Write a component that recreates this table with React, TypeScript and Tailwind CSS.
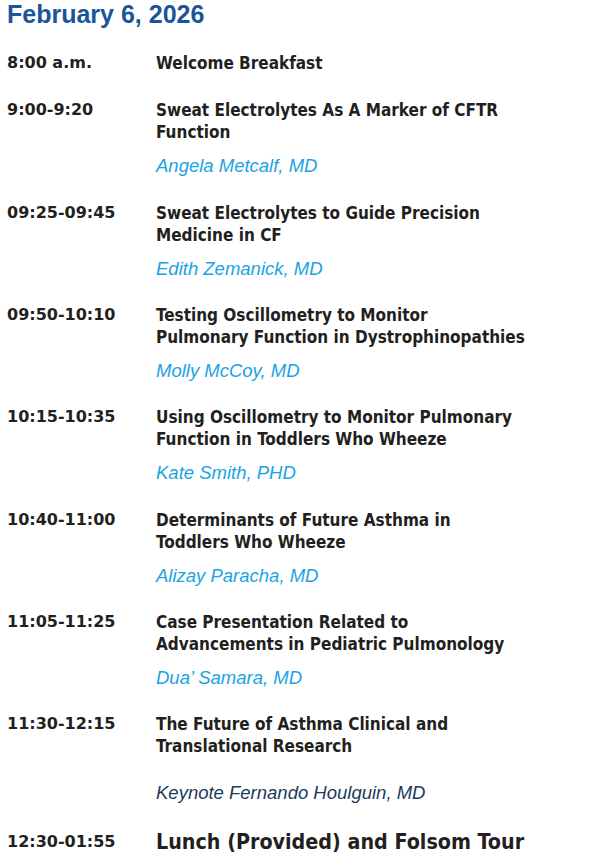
import React from 'react';

type Session = {
  time: string;
  title: string[];
  speaker?: string;
  keynote?: boolean;
};

const sessions: Session[] = [
  { time: '8:00 a.m.', title: ['Welcome Breakfast'] },
  {
    time: '9:00-9:20',
    title: ['Sweat Electrolytes As A Marker of CFTR', 'Function'],
    speaker: 'Angela Metcalf, MD',
  },
  {
    time: '09:25-09:45',
    title: ['Sweat Electrolytes to Guide Precision', 'Medicine in CF'],
    speaker: 'Edith Zemanick, MD',
  },
  {
    time: '09:50-10:10',
    title: ['Testing Oscillometry to Monitor', 'Pulmonary Function in Dystrophinopathies'],
    speaker: 'Molly McCoy, MD',
  },
  {
    time: '10:15-10:35',
    title: ['Using Oscillometry to Monitor Pulmonary', 'Function in Toddlers Who Wheeze'],
    speaker: 'Kate Smith, PHD',
  },
  {
    time: '10:40-11:00',
    title: ['Determinants of Future Asthma in', 'Toddlers Who Wheeze'],
    speaker: 'Alizay Paracha, MD',
  },
  {
    time: '11:05-11:25',
    title: ['Case Presentation Related to', 'Advancements in Pediatric Pulmonology'],
    speaker: 'Dua’ Samara, MD',
  },
  {
    time: '11:30-12:15',
    title: ['The Future of Asthma Clinical and', 'Translational Research'],
    speaker: 'Keynote Fernando Houlguin, MD',
    keynote: true,
  },
];

const App = () => {
  return (
    <div className="min-h-screen bg-white text-[#231f20]">
      <h2 className="pl-[7px] font-['Liberation_Sans',Arial,sans-serif] text-[25px] font-bold leading-[28px] text-[#1a5599]">
        February 6, 2026
      </h2>

      <div className="mt-[24px] flex flex-col gap-[24.33px] font-['DejaVu_Sans_Condensed','DejaVu_Sans',sans-serif] text-[17px] font-bold">
        {sessions.map((s, idx) => (
          <div
            key={s.time}
            className={idx === 0 ? 'flex flex-row items-start pb-[1px] pl-[7px]' : 'flex flex-row items-start pl-[7px]'}
          >
            <div className="w-[149px] shrink-0 font-['DejaVu_Sans',sans-serif] text-[16px] leading-[22px]">
              {s.time}
            </div>
            <div className="flex flex-col">
              <p className="leading-[22px]">
                {s.title.map((line, i) => (
                  <React.Fragment key={i}>
                    {i > 0 && <br />}
                    {line}
                  </React.Fragment>
                ))}
              </p>
              {s.speaker && (
                <p
                  className={
                    s.keynote
                      ? "mt-[25px] font-['Liberation_Sans',Arial,sans-serif] text-[18.5px] font-normal italic leading-[22px] text-[#1c3b5a]"
                      : "mt-[12px] font-['Liberation_Sans',Arial,sans-serif] text-[18.5px] font-normal italic leading-[22px] text-[#1aa3e3]"
                  }
                >
                  {s.speaker}
                </p>
              )}
            </div>
          </div>
        ))}

        <div className="flex flex-row items-center pl-[7px]">
          <div className="w-[149px] shrink-0 font-['DejaVu_Sans',sans-serif] text-[16px] leading-[26px]">
            12:30-01:55
          </div>
          <div className="text-[21.3px] leading-[26px]">Lunch (Provided) and Folsom Tour</div>
        </div>
      </div>
    </div>
  );
};

export default App;
